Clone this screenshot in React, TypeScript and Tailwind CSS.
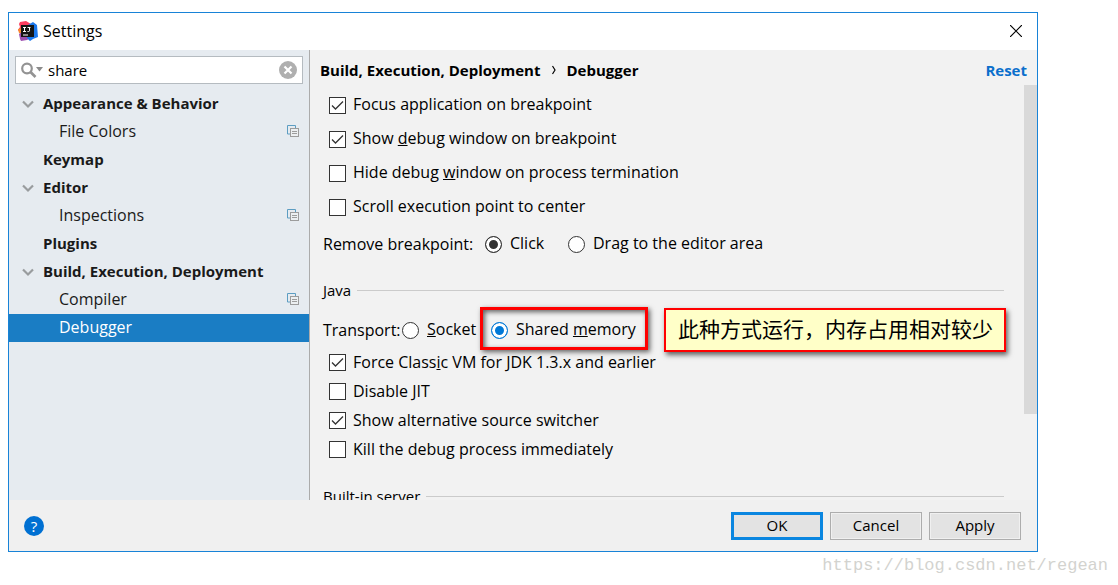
import { useState } from 'react'
import type { ReactNode } from 'react'

type TreeItem = {
  label: string
  kind: 'group' | 'section' | 'page'
  shared?: boolean
}

const treeItems: TreeItem[] = [
  { label: 'Appearance & Behavior', kind: 'group' },
  { label: 'File Colors', kind: 'page', shared: true },
  { label: 'Keymap', kind: 'section' },
  { label: 'Editor', kind: 'group' },
  { label: 'Inspections', kind: 'page', shared: true },
  { label: 'Plugins', kind: 'section' },
  { label: 'Build, Execution, Deployment', kind: 'group' },
  { label: 'Compiler', kind: 'page', shared: true },
  { label: 'Debugger', kind: 'page' },
]

function AppLogo() {
  return (
    <svg className="h-5 w-5 shrink-0" viewBox="0 0 20 20" aria-hidden="true">
      <path d="M2 1 8 0l5 3-2 8-9 1L0 9l2-3-1-3z" fill="#fb3c5f" />
      <path d="M0 8l5-1-1 6-3-1z" fill="#f98a2b" />
      <path d="M1 13l4-3 8 7-4 2-6 1-1-2z" fill="#9d4fb0" />
      <path d="M10 4l5-3 4 3 1 12-5 2-3 2-3-3z" fill="#1b78ec" />
      <rect x="3" y="4" width="13" height="12" fill="#141414" />
      <path d="M5 6.500h3M6.500 6.500v4M5 10.500h3M9.500 6.500h3M11.500 6.500v3.200q0 .8-1 .8h-1" fill="none" stroke="#fff" />
      <path d="M5 14h5" stroke="#fff" />
    </svg>
  )
}

function SharedIcon() {
  return (
    <svg className="h-3 w-3 shrink-0" viewBox="0 0 12 12" fill="none" aria-hidden="true">
      <path d="M3 9H.5V.5h8V3" stroke="#5c9dc2" />
      <rect x="3.500" y="3.500" width="8" height="8" fill="#eceff1" stroke="#9c9c9c" />
      <path d="M5 6.500h5M5 8.500h5" stroke="#9c9c9c" />
    </svg>
  )
}

function TreeRow({ item, selected, onSelect }: { item: TreeItem; selected: boolean; onSelect: () => void }) {
  return (
    <li>
      <button
        type="button"
        onClick={onSelect}
        className={`flex h-7 w-full items-center pr-2.5 pb-0.5 text-left ${selected ? 'bg-[#1a7dc4] text-white' : 'text-[#1a1a1a]'}`}
      >
        <span className="flex w-[34px] shrink-0 pl-[13px]">
          {item.kind === 'group' && (
            <svg className="h-3 w-3" viewBox="0 0 12 12" fill="none" aria-hidden="true">
              <path d="M1 4.500 6 9.500l5-5" stroke="#999c9e" strokeWidth="2.200" />
            </svg>
          )}
        </span>
        <span className={`flex-1 whitespace-nowrap ${item.kind === 'page' ? 'pl-4' : 'text-[15px] font-bold'}`}>
          {item.label}
        </span>
        {item.shared && <SharedIcon />}
      </button>
    </li>
  )
}

function CheckRow({ children, checked = false, tall = false }: { children: ReactNode; checked?: boolean; tall?: boolean }) {
  return (
    <label className={`flex items-center gap-[7px] pl-1.5 ${tall ? 'h-[34px]' : 'h-[29px]'}`}>
      <span className="grid shrink-0">
        <input
          type="checkbox"
          defaultChecked={checked}
          className="peer col-start-1 row-start-1 h-[17px] w-[17px] appearance-none border border-[#333] bg-white"
        />
        <svg
          className="pointer-events-none invisible col-start-1 row-start-1 h-[17px] w-[17px] peer-checked:visible"
          viewBox="0 0 17 17"
          fill="none"
          aria-hidden="true"
        >
          <path d="M3 8.500 6.500 12l7.500-7.500" stroke="#333" strokeWidth="1.300" />
        </svg>
      </span>
      <span className="pb-0.5 whitespace-nowrap">{children}</span>
    </label>
  )
}

function Radio({ name, checked = false, accent = false }: { name: string; checked?: boolean; accent?: boolean }) {
  return (
    <input
      type="radio"
      name={name}
      defaultChecked={checked}
      className={`h-[17px] w-[17px] shrink-0 appearance-none rounded-full border bg-white p-[3px] shadow-[inset_0_0_0_3px_#fff] ${
        accent ? 'border-[#0078d7] checked:bg-[#0078d7]' : 'border-[#333] checked:bg-[#333]'
      }`}
    />
  )
}

function SectionTitle({ children }: { children: ReactNode }) {
  return (
    <div className="flex h-6 items-center gap-1.5 pr-5">
      <h2 className="text-[15px] whitespace-nowrap">{children}</h2>
      <div className="h-px flex-1 bg-[#cbcbcb]" />
    </div>
  )
}

function DebuggerPage() {
  return (
    <form className="min-w-0 flex-1 overflow-hidden pt-[3px] pl-[13px]">
      <CheckRow tall checked>Focus application on breakpoint</CheckRow>
      <CheckRow tall checked>Show <u>d</u>ebug window on breakpoint</CheckRow>
      <CheckRow tall>Hide debug <u>w</u>indow on process termination</CheckRow>
      <CheckRow tall>Scroll execution point to center</CheckRow>

      <div className="flex h-10 items-center whitespace-nowrap">
        <span className="w-[162px]">Remove breakpoint:</span>
        <label className="flex w-[83px] items-center gap-2">
          <Radio name="remove" checked />
          <span className="pb-0.5">Click</span>
        </label>
        <label className="flex items-center gap-2">
          <Radio name="remove" />
          <span className="pb-0.5">Drag to the editor area</span>
        </label>
      </div>

      <div className="mt-3.5">
        <SectionTitle>Java</SectionTitle>
      </div>

      <div className="mt-2.5 flex h-9 items-center whitespace-nowrap">
        <span className="w-[79px] shrink-0">Transport:</span>
        <label className="flex w-[78px] shrink-0 items-center gap-2">
          <Radio name="transport" />
          <span className="pb-0.5"><u>S</u>ocket</span>
        </label>
        <label className="relative mb-1 flex h-[43px] w-[168px] shrink-0 items-center gap-2 border-3 border-[#f00] pt-1 pl-2 shadow-[2px_2px_5px_#0009,inset_2px_2px_5px_#0009]">
          <Radio name="transport" checked accent />
          <span className="pb-0.5">Shared <u>m</u>emory</span>
        </label>
        <p className="relative ml-4 flex h-11 w-[342px] shrink-0 items-center border-2 border-[#f00] bg-[#ffffc8] pb-1 pl-3 font-['Noto_Sans_CJK_SC',sans-serif] text-[21px] shadow-[2px_3px_5px_#0009]">
          此种方式运行，内存占用相对较少
        </p>
      </div>

      <CheckRow checked>Force Class<u>i</u>c VM for JDK 1.3.x and earlier</CheckRow>
      <CheckRow>Disable JIT</CheckRow>
      <CheckRow checked>Show alternative source switcher</CheckRow>
      <CheckRow>Kill the debug process immediately</CheckRow>

      <div className="mt-5">
        <SectionTitle>Built-in server</SectionTitle>
      </div>
    </form>
  )
}

export default function App() {
  const [query, setQuery] = useState('share')
  const [selected, setSelected] = useState('Debugger')

  return (
    <div className="flex h-screen flex-col bg-white pt-3 pl-2 font-['Open_Sans','Noto_Sans',sans-serif] text-[16px] leading-5 text-black">
      <main className="mr-20 flex min-h-0 flex-1 flex-col border border-[#1883d7] bg-[#f0f0f0]">
        <header className="flex h-[37px] shrink-0 items-center bg-white pr-[15px] pb-0.5 pl-[9px]">
          <AppLogo />
          <h1 className="ml-[5px] flex-1">Settings</h1>
          <button type="button" aria-label="Close">
            <svg className="h-3 w-3" viewBox="0 0 12 12" aria-hidden="true">
              <path d="m0 0 12 12M12 0 0 12" stroke="#000" strokeWidth="1.200" />
            </svg>
          </button>
        </header>

        <div className="flex min-h-0 flex-1">
          <nav className="w-[301px] shrink-0 border-r border-[#ababab] bg-[#e6ebf0] pt-1.5">
            <div className="mr-1.5 mb-1.5 ml-1.5 flex h-7 items-center border border-[#b5bbc0] bg-white px-[5px]">
              <svg className="h-4 w-[23px] shrink-0" viewBox="0 0 23 16" aria-hidden="true">
                <circle cx="6" cy="6.500" r="4.800" fill="none" stroke="#939393" strokeWidth="2.200" />
                <path d="m9.500 10 5 5" stroke="#939393" strokeWidth="2.600" />
                <path d="M15 5h7l-3.500 4.500z" fill="#8b8b8b" />
              </svg>
              <input
                aria-label="Search settings"
                value={query}
                onChange={(e) => setQuery(e.target.value)}
                className="ml-1 min-w-0 flex-1 bg-transparent text-[15px] outline-none"
              />
              <button type="button" aria-label="Clear search" onClick={() => setQuery('')}>
                <svg className="h-[18px] w-[18px]" viewBox="0 0 18 18" aria-hidden="true">
                  <circle cx="9" cy="9" r="9" fill="#afafaf" />
                  <path d="m5.500 5.500 7 7m0-7-7 7" stroke="#fff" strokeWidth="2.200" />
                </svg>
              </button>
            </div>
            <ul>
              {treeItems.map((item) => (
                <TreeRow
                  key={item.label}
                  item={item}
                  selected={item.label === selected}
                  onSelect={() => setSelected(item.label)}
                />
              ))}
            </ul>
          </nav>

          <section className="flex min-w-0 flex-1 flex-col bg-[#f2f2f2]">
            <div className="flex h-[35px] shrink-0 items-center pt-1 pr-2.5 pl-2.5 text-[15px] font-bold">
              <span>Build, Execution, Deployment</span>
              <svg className="mx-[11px] h-2.5 w-1" viewBox="0 0 4 10" fill="none" aria-hidden="true">
                <path d="M.5 1 3 5 .5 9" stroke="#000" strokeWidth="1.200" />
              </svg>
              <span className="flex-1">Debugger</span>
              <a href="#reset" className="text-[#0b6fcc]">Reset</a>
            </div>
            <div className="flex min-h-0 flex-1">
              <DebuggerPage />
              <div className="h-[329px] w-[13px] shrink-0 bg-[#d9d9d9]" />
            </div>
          </section>
        </div>

        <footer className="flex h-[51px] shrink-0 items-center gap-[7px] pr-4 pl-[15px] text-[15px]">
          <button
            type="button"
            aria-label="Help"
            className="mr-auto h-5 w-5 rounded-full bg-[#0070d2] text-center text-white"
          >
            ?
          </button>
          <button type="button" className="h-7 w-[92px] border-3 border-[#0a86e0] bg-[#e3e3e3] pb-0.5">OK</button>
          <button type="button" className="h-7 w-[92px] border border-[#adadad] bg-[#e3e3e3] pb-0.5 shadow-[inset_0_0_0_1px_#f0f0f0]">Cancel</button>
          <button type="button" className="h-7 w-[92px] border border-[#adadad] bg-[#e3e3e3] pb-0.5 shadow-[inset_0_0_0_1px_#f0f0f0]">Apply</button>
        </footer>
      </main>
      <p className="flex h-[33px] shrink-0 items-center justify-end pr-2.5 pb-1.5 font-['Liberation_Mono',monospace] text-[17px] text-[#d3d3cf]">
        https://blog.csdn.net/regean
      </p>
    </div>
  )
}
